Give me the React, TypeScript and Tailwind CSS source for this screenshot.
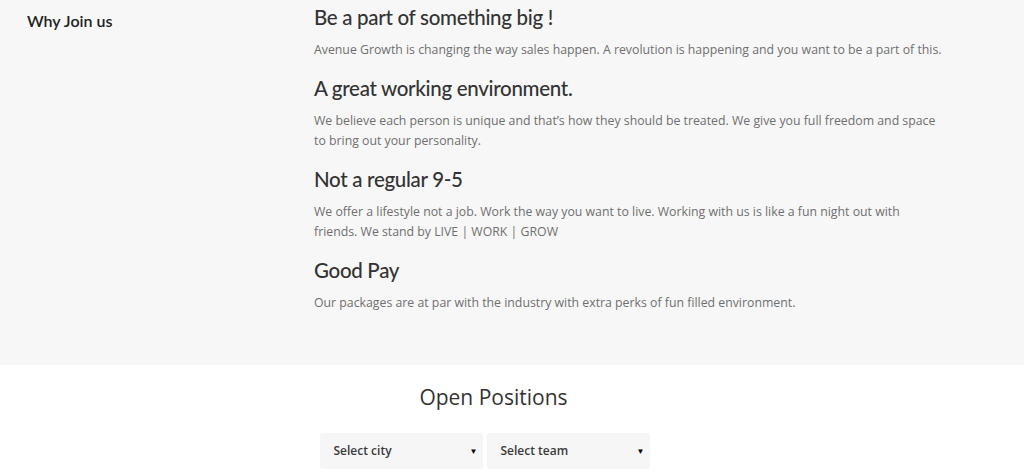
import React from "react";

const sections = [
  {
    h: "Be a part of something big !",
    p: "Avenue Growth is changing the way sales happen. A revolution is happening and you want to be a part of this.",
  },
  {
    h: "A great working environment.",
    p: "We believe each person is unique and that\u2019s how they should be treated. We give you full freedom and space to bring out your personality.",
  },
  {
    h: "Not a regular 9-5",
    p: "We offer a lifestyle not a job. Work the way you want to live. Working with us is like a fun night out with friends. We stand by LIVE | WORK | GROW",
  },
  {
    h: "Good Pay",
    p: "Our packages are at par with the industry with extra perks of fun filled environment.",
  },
];

function Select({ label }: { label: string }) {
  return (
    <div className="w-[163px] h-[36px] bg-[#f6f6f6] rounded-[3px] flex items-center justify-between pl-[14px] pr-[5px]">
      <span className="text-[12px] text-[#3a3a3a] font-semibold">{label}</span>
      <span className="text-[8px] text-black leading-none mb-[1px]">▼</span>
    </div>
  );
}

export default function App() {
  return (
    <div className="w-[1024px] h-[475px] overflow-hidden bg-white" style={{ fontFamily: "'Open Sans', sans-serif" }}>
      <div className="bg-[#f7f7f7] h-[365px] flex">
        <div className="w-[314px] pl-[27px] pt-[9px]">
          <div className="text-[16px] font-semibold text-[#222]" style={{ fontFamily: "Lato, sans-serif" }}>
            Why Join us
          </div>
        </div>
        <div className="w-[632px] pt-[2px]">
          {sections.map((s, i) => (
            <div key={i} className="mb-[13px]">
              <h2
                className="text-[20.5px] leading-[30px] font-medium text-[#333] mb-[8px] tracking-[-0.3px]"
                style={{ fontFamily: "Lato, sans-serif" }}
              >
                {s.h}
              </h2>
              <p className="text-[12.3px] leading-[20px] text-[#6f6f6f]">{s.p}</p>
            </div>
          ))}
        </div>
      </div>
      <div className="flex flex-col items-center">
        <div className="ml-[-37px] mt-[17px] text-[21px] leading-[30px] text-[#333]">Open Positions</div>
        <div className="ml-[-55px] mt-[21px] flex gap-[4px]">
          <Select label="Select city" />
          <Select label="Select team" />
        </div>
      </div>
    </div>
  );
}
